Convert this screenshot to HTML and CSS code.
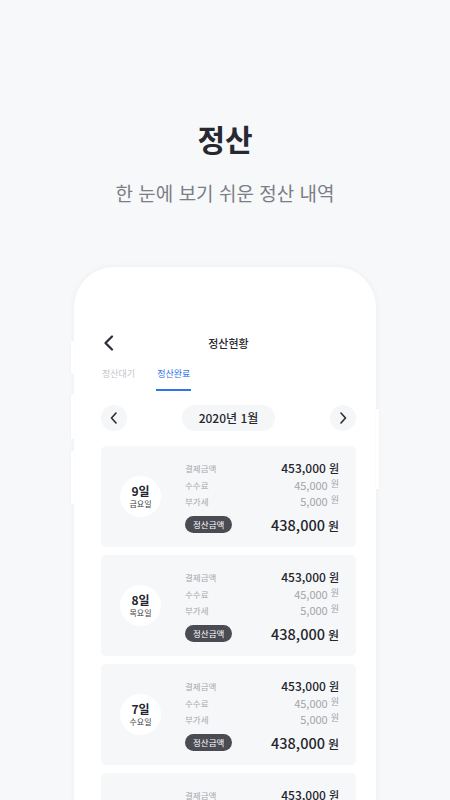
FILE: index.html
```html
<!DOCTYPE html>
<html lang="ko">
<head>
    <meta charset="utf-8">
    <title>정산</title>
    <link rel="stylesheet" href="styles.css">
</head>
<body>
    <div class="screen">
        <div class="intro">
            <h1>정산</h1>
            <p>한 눈에 보기 쉬운 정산 내역</p>
        </div>

        <div class="phone">
            <span class="side-btn left b1"></span>
            <span class="side-btn left b2"></span>
            <span class="side-btn left b3"></span>
            <span class="side-btn right b4"></span>

            <div class="topbar">
                <svg class="back" width="12" height="16" viewBox="0 0 12 16">
                    <path d="M9 1.5 L2.5 8 L9 14.5" fill="none" stroke="#2b2c34" stroke-width="2.2" stroke-linecap="round" stroke-linejoin="round"/>
                </svg>
                <div class="topbar-title">정산현황</div>
            </div>

            <div class="tabs">
                <div class="tab">정산대기</div>
                <div class="tab active">정산완료</div>
            </div>

            <div class="month-nav">
                <div class="round-btn">
                    <svg width="8" height="12" viewBox="0 0 8 12"><path d="M6 1 L1.5 6 L6 11" fill="none" stroke="#2b2c34" stroke-width="1.6" stroke-linecap="round" stroke-linejoin="round"/></svg>
                </div>
                <div class="month">2020년 1월</div>
                <div class="round-btn">
                    <svg width="8" height="12" viewBox="0 0 8 12"><path d="M2 1 L6.5 6 L2 11" fill="none" stroke="#2b2c34" stroke-width="1.6" stroke-linecap="round" stroke-linejoin="round"/></svg>
                </div>
            </div>

            <div class="cards">
                <div class="card">
                    <div class="day">
                        <strong>9일</strong>
                        <span>금요일</span>
                    </div>
                    <div class="detail">
                        <div class="row main"><span class="label">결제금액</span><span class="val">453,000<em>원</em></span></div>
                        <div class="row sub"><span class="label">수수료</span><span class="val">45,000<em>원</em></span></div>
                        <div class="row sub"><span class="label">부가세</span><span class="val">5,000<em>원</em></span></div>
                        <div class="row total"><span class="badge">정산금액</span><span class="val">438,000<em>원</em></span></div>
                    </div>
                </div>

                <div class="card">
                    <div class="day">
                        <strong>8일</strong>
                        <span>목요일</span>
                    </div>
                    <div class="detail">
                        <div class="row main"><span class="label">결제금액</span><span class="val">453,000<em>원</em></span></div>
                        <div class="row sub"><span class="label">수수료</span><span class="val">45,000<em>원</em></span></div>
                        <div class="row sub"><span class="label">부가세</span><span class="val">5,000<em>원</em></span></div>
                        <div class="row total"><span class="badge">정산금액</span><span class="val">438,000<em>원</em></span></div>
                    </div>
                </div>

                <div class="card">
                    <div class="day">
                        <strong>7일</strong>
                        <span>수요일</span>
                    </div>
                    <div class="detail">
                        <div class="row main"><span class="label">결제금액</span><span class="val">453,000<em>원</em></span></div>
                        <div class="row sub"><span class="label">수수료</span><span class="val">45,000<em>원</em></span></div>
                        <div class="row sub"><span class="label">부가세</span><span class="val">5,000<em>원</em></span></div>
                        <div class="row total"><span class="badge">정산금액</span><span class="val">438,000<em>원</em></span></div>
                    </div>
                </div>

                <div class="card">
                    <div class="day">
                        <strong>6일</strong>
                        <span>화요일</span>
                    </div>
                    <div class="detail">
                        <div class="row main"><span class="label">결제금액</span><span class="val">453,000<em>원</em></span></div>
                        <div class="row sub"><span class="label">수수료</span><span class="val">45,000<em>원</em></span></div>
                        <div class="row sub"><span class="label">부가세</span><span class="val">5,000<em>원</em></span></div>
                        <div class="row total"><span class="badge">정산금액</span><span class="val">438,000<em>원</em></span></div>
                    </div>
                </div>
            </div>
        </div>
    </div>
</body>
</html>
```

FILE: styles.css
```css
html, body {
    margin: 0;
    padding: 0;
}
body {
    background-color: #f7f8fa;
    font-family: "Noto Sans CJK KR", "Noto Sans", sans-serif;
    color: #2b2c34;
}
.screen {
    width: 450px;
    height: 800px;
    overflow: hidden;
}
.intro {
    padding-top: 119px;
    text-align: center;
}
.intro h1 {
    margin: 0;
    font-size: 30px;
    line-height: 38px;
    font-weight: 700;
    color: #272831;
}
.intro p {
    margin: 22px 0 0;
    font-size: 19px;
    line-height: 28px;
    font-weight: 400;
    color: #7c7e86;
}

/* phone frame */
.phone {
    position: relative;
    width: 302px;
    height: 620px;
    margin: 60px 0 0 74px;
    padding: 0 20px 0 27px;
    box-sizing: border-box;
    background-color: #fff;
    border-radius: 40px 40px 0 0;
    box-shadow: 0 0 6px rgba(0, 0, 0, 0.05);
}
.side-btn {
    position: absolute;
    width: 3px;
    background-color: #fff;
    box-shadow: 0 0 2px rgba(0, 0, 0, 0.06);
}
.side-btn.left { left: -3px; }
.side-btn.right { right: -3px; }
.b1 { top: 74px; height: 33px; }
.b2 { top: 127px; height: 45px; }
.b3 { top: 184px; height: 53px; }
.b4 { top: 142px; height: 80px; }

.topbar {
    position: relative;
    height: 24px;
    padding-top: 64px;
    display: flex;
    align-items: center;
    justify-content: center;
}
.back {
    position: absolute;
    left: 2px;
    top: 68px;
}
.topbar-title {
    font-size: 11px;
    font-weight: 500;
    color: #26272e;
}

.tabs {
    display: flex;
    gap: 20px;
    margin-top: 12px;
}
.tab {
    font-size: 9px;
    line-height: 14px;
    padding: 0 1px 8px;
    color: #c5c6ca;
    border-bottom: 2px solid transparent;
}
.tab.active {
    color: #2f74ea;
    border-bottom-color: #2f74ea;
}

.month-nav {
    display: flex;
    align-items: center;
    justify-content: space-between;
    margin-top: 14px;
}
.round-btn {
    width: 26px;
    height: 26px;
    border-radius: 50%;
    background-color: #f5f6f8;
    display: flex;
    align-items: center;
    justify-content: center;
}
.month {
    width: 93px;
    height: 26px;
    line-height: 26px;
    border-radius: 13px;
    background-color: #f5f6f8;
    text-align: center;
    font-size: 12px;
    font-weight: 500;
    color: #26272e;
}

.cards {
    margin-top: 15px;
    display: flex;
    flex-direction: column;
    gap: 8px;
}
.card {
    height: 101px;
    box-sizing: border-box;
    padding: 0 17px 0 19px;
    border-radius: 5px;
    background-color: #f6f7f9;
    display: flex;
    align-items: center;
    gap: 24px;
}
.day {
    width: 41px;
    height: 41px;
    border-radius: 50%;
    background-color: #fff;
    display: flex;
    flex-direction: column;
    align-items: center;
    justify-content: center;
    flex-shrink: 0;
}
.day strong {
    font-size: 12px;
    line-height: 14px;
    font-weight: 700;
    color: #24252c;
}
.day span {
    font-size: 8px;
    line-height: 11px;
    color: #3d3e45;
}
.detail {
    flex: 1;
    display: flex;
    flex-direction: column;
    padding-top: 0;
}
.row {
    display: flex;
    justify-content: space-between;
    align-items: center;
}
.label {
    font-size: 8.5px;
    color: #a6a8ad;
}
.val em {
    font-style: normal;
    margin-left: 3px;
}
.row.main {
    height: 18px;
}
.row.main .val {
    font-size: 12px;
    font-weight: 500;
    color: #24252c;
}
.row.main .val em {
    font-size: 11px;
}
.row.sub {
    height: 16.5px;
}
.row.sub .val {
    font-size: 11px;
    color: #a2a4a9;
}
.row.sub .val em {
    font-size: 9px;
    vertical-align: 3px;
}
.row.total {
    margin-top: 4px;
}
.badge {
    height: 17px;
    line-height: 17px;
    padding: 0 8px;
    border-radius: 9px;
    background-color: #4a4b53;
    color: #fff;
    font-size: 8.5px;
}
.row.total .val {
    font-size: 14.5px;
    font-weight: 500;
    color: #24252c;
}
.row.total .val em {
    font-size: 12px;
}
```
